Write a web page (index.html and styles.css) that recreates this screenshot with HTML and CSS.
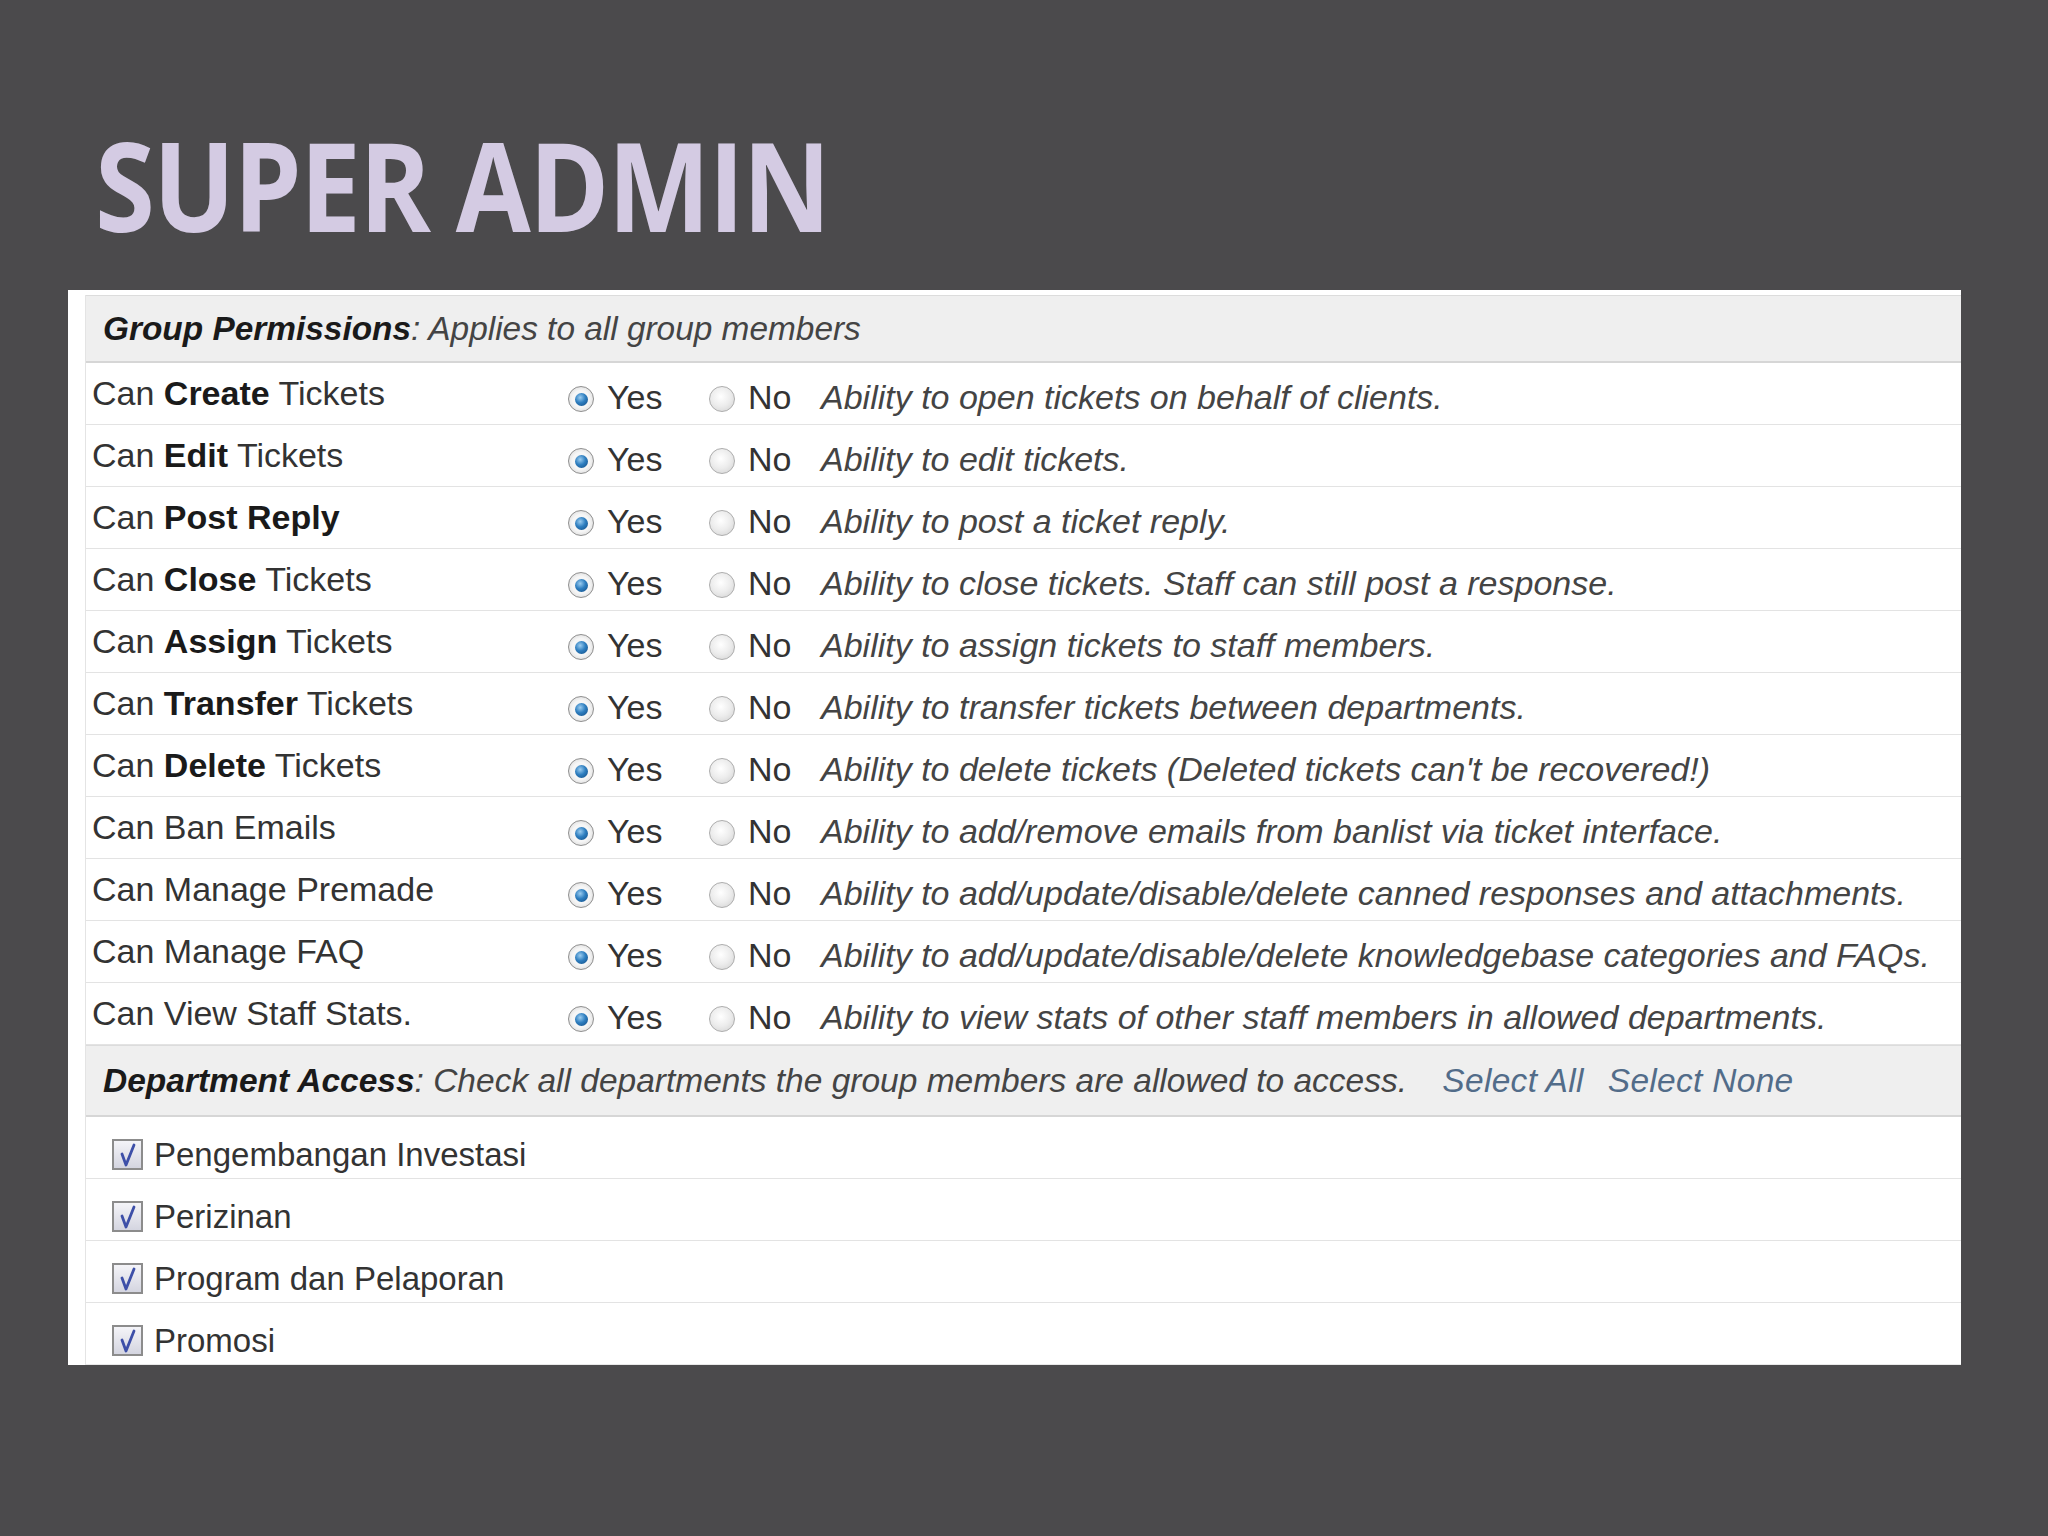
FILE: index.html
```html
<!DOCTYPE html>
<html>
<head>
<meta charset="utf-8">
<title>Super Admin</title>
<link rel="stylesheet" href="styles.css">
</head>
<body>
<div class="slide">
  <h1 class="title">SUPER ADMIN</h1>
  <div class="panel">
    <div class="table">
      <div class="section-head"><b>Group Permissions</b>: Applies to all group members</div>

      <div class="perm-row">
        <div class="label">Can <b>Create</b> Tickets</div>
        <span class="radio on"></span><span class="opt yes">Yes</span>
        <span class="radio"></span><span class="opt no">No</span>
        <div class="desc">Ability to open tickets on behalf of clients.</div>
      </div>
      <div class="perm-row">
        <div class="label">Can <b>Edit</b> Tickets</div>
        <span class="radio on"></span><span class="opt yes">Yes</span>
        <span class="radio"></span><span class="opt no">No</span>
        <div class="desc">Ability to edit tickets.</div>
      </div>
      <div class="perm-row">
        <div class="label">Can <b>Post Reply</b></div>
        <span class="radio on"></span><span class="opt yes">Yes</span>
        <span class="radio"></span><span class="opt no">No</span>
        <div class="desc">Ability to post a ticket reply.</div>
      </div>
      <div class="perm-row">
        <div class="label">Can <b>Close</b> Tickets</div>
        <span class="radio on"></span><span class="opt yes">Yes</span>
        <span class="radio"></span><span class="opt no">No</span>
        <div class="desc">Ability to close tickets. Staff can still post a response.</div>
      </div>
      <div class="perm-row">
        <div class="label">Can <b>Assign</b> Tickets</div>
        <span class="radio on"></span><span class="opt yes">Yes</span>
        <span class="radio"></span><span class="opt no">No</span>
        <div class="desc">Ability to assign tickets to staff members.</div>
      </div>
      <div class="perm-row">
        <div class="label">Can <b>Transfer</b> Tickets</div>
        <span class="radio on"></span><span class="opt yes">Yes</span>
        <span class="radio"></span><span class="opt no">No</span>
        <div class="desc">Ability to transfer tickets between departments.</div>
      </div>
      <div class="perm-row">
        <div class="label">Can <b>Delete</b> Tickets</div>
        <span class="radio on"></span><span class="opt yes">Yes</span>
        <span class="radio"></span><span class="opt no">No</span>
        <div class="desc">Ability to delete tickets (Deleted tickets can't be recovered!)</div>
      </div>
      <div class="perm-row">
        <div class="label">Can Ban Emails</div>
        <span class="radio on"></span><span class="opt yes">Yes</span>
        <span class="radio"></span><span class="opt no">No</span>
        <div class="desc">Ability to add/remove emails from banlist via ticket interface.</div>
      </div>
      <div class="perm-row">
        <div class="label">Can Manage Premade</div>
        <span class="radio on"></span><span class="opt yes">Yes</span>
        <span class="radio"></span><span class="opt no">No</span>
        <div class="desc">Ability to add/update/disable/delete canned responses and attachments.</div>
      </div>
      <div class="perm-row">
        <div class="label">Can Manage FAQ</div>
        <span class="radio on"></span><span class="opt yes">Yes</span>
        <span class="radio"></span><span class="opt no">No</span>
        <div class="desc">Ability to add/update/disable/delete knowledgebase categories and FAQs.</div>
      </div>
      <div class="perm-row">
        <div class="label">Can View Staff Stats.</div>
        <span class="radio on"></span><span class="opt yes">Yes</span>
        <span class="radio"></span><span class="opt no">No</span>
        <div class="desc">Ability to view stats of other staff members in allowed departments.</div>
      </div>

      <div class="section-head dept-head"><b>Department Access</b>: Check all departments the group members are allowed to access. <span class="links"><span class="link">Select All</span><span class="link">Select None</span></span></div>

      <div class="dept-row"><span class="check"><svg viewBox="0 0 30 30" width="30" height="30"><path d="M9 14 L13 25 L21 5" fill="none" stroke="#3d4fa8" stroke-width="2.8" stroke-linecap="round" stroke-linejoin="round"/></svg></span><span class="dept">Pengembangan Investasi</span></div>
      <div class="dept-row"><span class="check"><svg viewBox="0 0 30 30" width="30" height="30"><path d="M9 14 L13 25 L21 5" fill="none" stroke="#3d4fa8" stroke-width="2.8" stroke-linecap="round" stroke-linejoin="round"/></svg></span><span class="dept">Perizinan</span></div>
      <div class="dept-row"><span class="check"><svg viewBox="0 0 30 30" width="30" height="30"><path d="M9 14 L13 25 L21 5" fill="none" stroke="#3d4fa8" stroke-width="2.8" stroke-linecap="round" stroke-linejoin="round"/></svg></span><span class="dept">Program dan Pelaporan</span></div>
      <div class="dept-row last"><span class="check"><svg viewBox="0 0 30 30" width="30" height="30"><path d="M9 14 L13 25 L21 5" fill="none" stroke="#3d4fa8" stroke-width="2.8" stroke-linecap="round" stroke-linejoin="round"/></svg></span><span class="dept">Promosi</span></div>
    </div>
  </div>
</div>
</body>
</html>
```

FILE: styles.css
```css
html, body {
  margin: 0;
  padding: 0;
  background: #4b4a4c;
}
.slide {
  width: 2048px;
  height: 1536px;
  display: flex;
  flex-direction: column;
}
.title {
  margin: 123px 0 0 95px;
  height: 123px;
  font-family: "Open Sans", "Liberation Sans", sans-serif;
  font-weight: 700;
  font-size: 123px;
  line-height: 123px;
  color: #d4cbe3;
  letter-spacing: -2px;
  transform: scaleX(0.884);
  transform-origin: left center;
  white-space: nowrap;
}
.panel {
  margin: 44px 0 0 68px;
  width: 1893px;
  height: 1075px;
  box-sizing: border-box;
  background: #ffffff;
  padding: 5px 0 0 17px;
  font-family: "Liberation Sans", Arial, sans-serif;
  font-size: 34px;
  color: #333;
}
.table {
  display: flex;
  flex-direction: column;
  border-left: 1px solid #e4e4e4;
}
.section-head {
  height: 68px;
  box-sizing: border-box;
  background: #efefef;
  border-top: 1px solid #dcdcdc;
  border-bottom: 2px solid #d6d6d6;
  padding-left: 17px;
  display: flex;
  align-items: center;
  font-style: italic;
  font-size: 33.4px;
  color: #444;
  white-space: pre;
}
.section-head b {
  color: #1a1a1a;
}
.dept-head {
  height: 72px;
  font-size: 33.5px;
}
.links {
  display: flex;
  gap: 24px;
  margin-left: 26px;
}
.link {
  color: #526c89;
  letter-spacing: 0.3px;
}
.perm-row {
  height: 62px;
  box-sizing: border-box;
  border-bottom: 1px solid #e3e3e3;
  padding: 8px 0 0 6px;
  display: flex;
  align-items: center;
  white-space: nowrap;
}
.label {
  width: 476px;
  margin-bottom: 8px;
  color: #333;
}
.label b {
  color: #1a1a1a;
}
.radio {
  width: 26px;
  height: 26px;
  box-sizing: border-box;
  border-radius: 50%;
  border: 1px solid #adadad;
  background: radial-gradient(circle at 45% 40%, #ffffff 0%, #ececec 50%, #cfcfcf 100%);
  margin-right: 13px;
  margin-top: 3px;
  flex: none;
  display: flex;
  align-items: center;
  justify-content: center;
}
.radio.on {
  border-color: #8f8f8f;
  background: radial-gradient(circle, #f6f6f6 50%, #cfcfcf 100%);
}
.radio.on::after {
  content: "";
  width: 13px;
  height: 13px;
  border-radius: 50%;
  background: radial-gradient(circle at 40% 35%, #9ccdf0 0%, #2f7fc0 45%, #104a82 100%);
}
.opt {
  color: #333;
}
.opt.yes {
  width: 102px;
}
.opt.no {
  width: 73px;
}
.desc {
  font-style: italic;
  color: #444;
}
.dept-row {
  height: 62px;
  box-sizing: border-box;
  border-bottom: 1px solid #e3e3e3;
  padding: 14px 0 0 26px;
  display: flex;
  align-items: center;
  gap: 11px;
  font-size: 33px;
  color: #333;
}
.dept-row.last {
  border-bottom: 1px solid #e8e8e8;
}
.check {
  width: 31px;
  height: 31px;
  box-sizing: border-box;
  border: 2px solid #8c8c8c;
  background: linear-gradient(#f4f4f8, #d4d5e0);
  display: flex;
  align-items: center;
  justify-content: center;
  overflow: hidden;
}
.check svg {
  flex: none;
}
```
